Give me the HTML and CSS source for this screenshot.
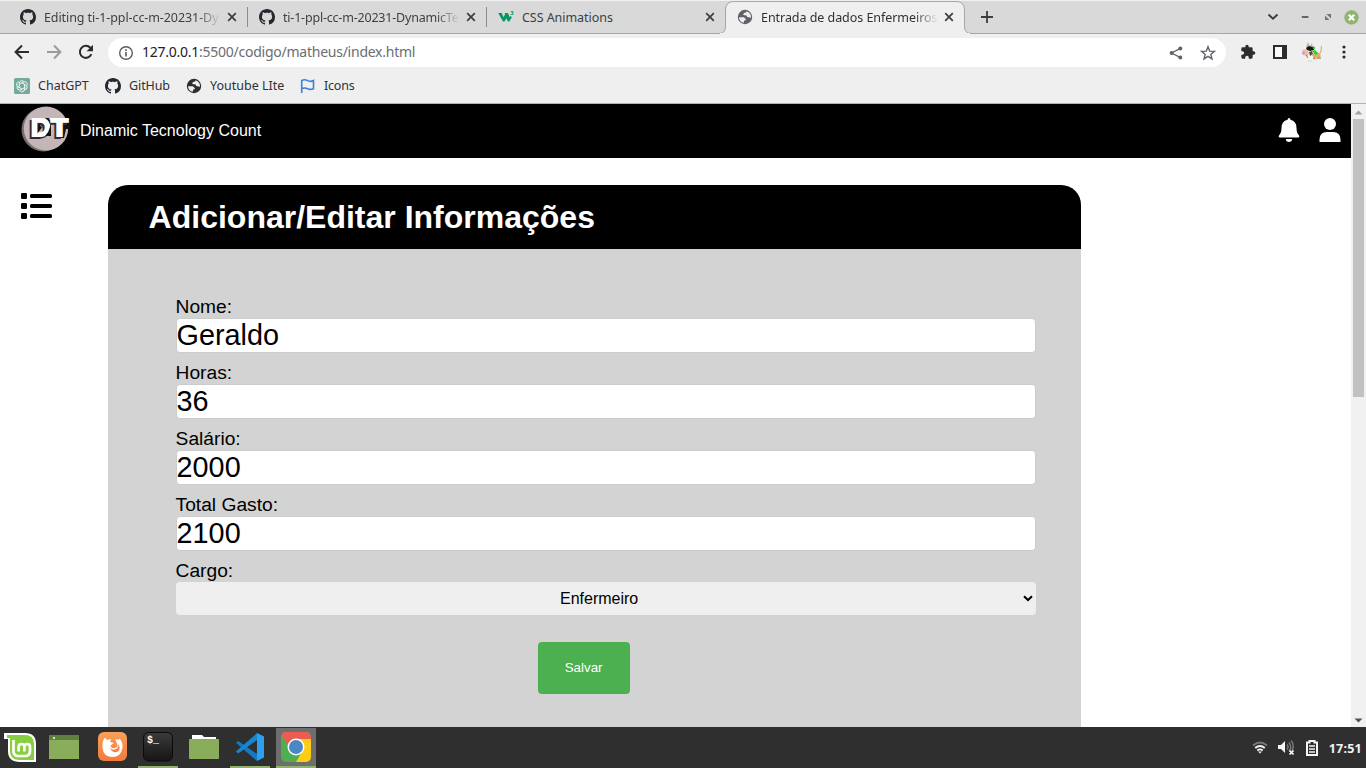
FILE: index.html
```html
<!DOCTYPE html>
<html lang="pt-BR">
<head>
<meta charset="utf-8">
<title>Entrada de dados Enfermeiros</title>
<link rel="stylesheet" href="styles.css">
</head>
<body>
<svg class="defs" width="0" height="0">
  <symbol id="github" viewBox="0 0 16 16"><path d="M8 0C3.58 0 0 3.58 0 8c0 3.54 2.29 6.53 5.47 7.59.4.07.55-.17.55-.38 0-.19-.01-.82-.01-1.49-2.01.37-2.53-.49-2.69-.94-.09-.23-.48-.94-.82-1.13-.28-.15-.68-.52-.01-.53.63-.01 1.08.58 1.23.82.72 1.21 1.87.87 2.33.66.07-.52.28-.87.51-1.07-1.78-.2-3.64-.89-3.64-3.95 0-.87.31-1.59.82-2.15-.08-.2-.36-1.02.08-2.12 0 0 .67-.21 2.2.82.64-.18 1.32-.27 2-.27s1.36.09 2 .27c1.53-1.04 2.2-.82 2.2-.82.44 1.1.16 1.92.08 2.12.51.56.82 1.27.82 2.15 0 3.07-1.87 3.75-3.65 3.95.29.25.54.73.54 1.48 0 1.07-.01 1.93-.01 2.2 0 .21.15.46.55.38A8.01 8.01 0 0 0 16 8c0-4.42-3.58-8-8-8z"/></symbol>
  <symbol id="globe" viewBox="0 0 16 16"><circle cx="8" cy="8" r="7.2"/><path d="M2 8.2 6.8 8.3 9 10.2 8.2 11.4 7.1 11.5 6.8 13.8C4 13.3 2.1 11.2 2 8.2zM9.4 2.2 9.2 3.5 6.9 4.1 6.2 5.9 9.7 6.5 10.2 8.1 13.9 8.8C14.5 5.8 12.5 3 9.4 2.2z" fill="#efefef"/></symbol>
  <symbol id="close" viewBox="0 0 10 10"><path d="M1.2 1.2 8.8 8.8M8.8 1.2 1.2 8.8" fill="none" stroke="#3c3d3f" stroke-width="1.7"/></symbol>
</svg>

<div class="browser">
  <div class="tabstrip">
    <div class="tab tab-first">
      <svg class="fav"><use href="#github"/></svg><span class="title t1 fade">Editing ti-1-ppl-cc-m-20231-Dy</span><svg class="x"><use href="#close"/></svg>
    </div>
    <div class="tab">
      <svg class="fav"><use href="#github"/></svg><span class="title t2 fade">ti-1-ppl-cc-m-20231-DynamicTe</span><svg class="x"><use href="#close"/></svg>
    </div>
    <div class="tab tab-w3">
      <svg class="fav w3" viewBox="0 0 16 16"><path d="M.2 4h3.500l1.800 4.200L7.100 5 6.700 4h3.200l1.900 4.300L12.700 7l1.200 1.300-2.600 4.200H9.900L8.200 9.300l-1.600 3.200H5z" fill="#059862"/><text x="12.3" y="6.2" font-size="6">3</text></svg><span class="title t3">CSS Animations</span><svg class="x"><use href="#close"/></svg>
    </div>
    <div class="tab tab-active">
      <svg class="tab-shape" viewBox="0 0 254 34"><path d="M0 32.5Q7.500 32.500 7.500 26V9Q7.500.5 16 .5H238Q246.500.5 246.500 9V26Q246.500 32.500 254 32.500" fill="#efefef" stroke="#a6a6a6"/><path d="M2 32h250v2H2z" fill="#efefef"/></svg>
      <svg class="fav grey"><use href="#globe"/></svg><span class="title t4 fade">Entrada de dados Enfermeiros</span><svg class="x"><use href="#close"/></svg>
    </div>
    <svg class="plus" viewBox="0 0 14 14"><path d="M7 1v12M1 7h12" stroke="#3c3d3f" stroke-width="1.8"/></svg>
    <div class="window-controls">
      <svg width="12" height="8" viewBox="0 0 12 8"><path d="m1.500 1.500 4.500 4.300 4.500-4.300" fill="none" stroke="#3c3d3f" stroke-width="1.9"/></svg>
      <svg class="mini" width="8" height="8" viewBox="0 0 8 8"><path d="M.8 4h6.600" stroke="#666" stroke-width="2"/></svg>
      <svg class="maxi" width="8" height="8" viewBox="0 0 8 8"><path d="M2.500 1H7v4.500zM1 2.500V7h4.500z" fill="#737373"/></svg>
      <svg class="quit" width="15" height="15" viewBox="0 0 15 15"><circle cx="7.500" cy="7.500" r="7.200" fill="#92b372"/><path d="m4.800 4.800 5.400 5.400m0-5.400-5.400 5.400" stroke="#fff" stroke-width="2.200"/></svg>
    </div>
  </div>

  <div class="toolbar">
    <svg class="nav" viewBox="0 0 16 16"><path d="M15 8H2M8 1.500 1.600 8 8 14.500" fill="none" stroke="#2b2c2e" stroke-width="2"/></svg>
    <svg class="nav" viewBox="0 0 16 16"><path d="M1 8h13M8 1.500 14.400 8 8 14.500" fill="none" stroke="#9b9b9b" stroke-width="2"/></svg>
    <svg class="nav" viewBox="0 0 16 16"><path d="M13.400 10.200A6 6 0 1 1 12.300 3.800L14 5.500" fill="none" stroke="#2b2c2e" stroke-width="2"/><path d="M15 .8v6.400H8.600z" fill="#2b2c2e"/></svg>
    <div class="omnibox">
      <svg width="16" height="16" viewBox="0 0 16 16"><circle cx="8" cy="8" r="6.300" fill="none" stroke="#5a5d60" stroke-width="1.400"/><path d="M8 7v4.500M8 4.200v1.700" stroke="#5a5d60" stroke-width="1.600"/></svg>
      <span class="url"><b>127.0.0.1</b>:5500/codigo/matheus/index.html</span>
      <svg width="14" height="14" viewBox="0 0 14 14"><path d="M11.500 2.400 2.600 7l8.900 4.600" fill="none" stroke="#5f6368" stroke-width="1.300"/><g fill="#5f6368"><circle cx="11.300" cy="2.400" r="2"/><circle cx="2.600" cy="7" r="2"/><circle cx="11.300" cy="11.600" r="2"/></g></svg>
      <svg class="star" width="16" height="16" viewBox="0 0 16 16"><path d="m8 1.800 1.700 4.300 4.700.3-3.600 3 1.200 4.500L8 11.400l-4 2.500 1.200-4.500-3.600-3 4.700-.3z" fill="none" stroke="#5f6368" stroke-width="1.400"/></svg>
    </div>
    <svg class="puzzle" width="16" height="16" viewBox="0 0 24 24"><path d="M20.500 11H19V7a2 2 0 0 0-2-2h-4V3.500a2.500 2.500 0 0 0-5 0V5H4a2 2 0 0 0-2 2v3.800h1.500a2.700 2.700 0 0 1 0 5.400H2V20a2 2 0 0 0 2 2h3.800v-1.500a2.700 2.700 0 0 1 5.400 0V22H17a2 2 0 0 0 2-2v-4h1.500a2.500 2.500 0 0 0 0-5z" fill="#2b2c2e"/></svg>
    <svg class="panel" width="14" height="14" viewBox="0 0 14 14"><path d="M1 1h12v12H1z" fill="#fafafa" stroke="#2b2c2e" stroke-width="2"/><path d="M9 1h4v12H9z" fill="#2b2c2e"/></svg>
    <svg class="avatar" width="22" height="22" viewBox="0 0 22 22"><path d="M3 5l6-3 5 3 4 6-3 8H7l-4-5z" fill="#f6f3ea"/><path d="M17 14q3.500-1 3.500-9" fill="none" stroke="#d9b48f" stroke-width="1.300"/><path d="M11 14l3-3 4 1 2 3-3 3-4-.5z" fill="#dfae6c"/><path d="M1 9l4-1 3 4-1 3-5-1z" fill="#e6c3a6"/><path d="M5 6 7 1l2 4 2-3 1 5-5 2z" fill="#bdb7ac"/><path d="M5 7l3-2 5 1.500V9L9 10 6 9z" fill="#171c16"/><path d="M8 11l3-1 1 3-3 2z" fill="#555047"/><path d="m12 5 2 1v2h-2zM11 10l3-1 3 3-2 2z" fill="#24d424"/><circle cx="2.500" cy="12" r="1.600" fill="#e48fd0"/><path d="M5 14l2 3M12 17l2 1M17 17h3" stroke="#8b6d4c"/><path d="M7 20h4" stroke="#b5e6de"/></svg>
    <svg class="kebab" width="4" height="14" viewBox="0 0 4 14"><g fill="#2b2c2e"><circle cx="2" cy="2" r="1.600"/><circle cx="2" cy="7" r="1.600"/><circle cx="2" cy="12" r="1.600"/></g></svg>
  </div>

  <div class="bookmarks">
    <svg width="16" height="16" viewBox="0 0 16 16"><rect width="16" height="16" rx="1.500" fill="#74aa9c"/><g fill="none" stroke="#fff" stroke-width=".85"><g id="knot"><path d="M5.300 10V5.200a2.600 2.600 0 0 1 4.800-1.300M5.600 6.300 9.700 4a2.600 2.600 0 0 1 3.500 3.200"/></g><use href="#knot" transform="rotate(120 8 8)"/><use href="#knot" transform="rotate(240 8 8)"/></g></svg>
    <span class="bm b1">ChatGPT</span>
    <svg width="16" height="16" fill="#24292f"><use href="#github"/></svg>
    <span class="bm b2">GitHub</span>
    <svg width="16" height="16" fill="#2d2e30"><use href="#globe"/></svg>
    <span class="bm b3">Youtube LIte</span>
    <svg width="16" height="16" viewBox="0 0 16 16"><path d="M1.700 15V2.400q3.200-1.300 6 .2t5.800-.1v8.200q-3 1.400-5.800 0t-6 .1" fill="none" stroke="#3f7fd9" stroke-width="1.600"/></svg>
    <span class="bm b4">Icons</span>
  </div>
</div>

<div class="viewport">
  <div class="page">
    <header class="site-header">
      <svg class="logo" width="49" height="46" viewBox="0 0 49 46"><ellipse cx="22.500" cy="23.500" rx="22" ry="22" fill="#776e6f"/><ellipse cx="25" cy="22.500" rx="22.200" ry="22" fill="#c4b5b6"/><path d="M44 16h5v7h-4l-2 9h-4V20z" fill="#111"/><g class="logo-text"><text x="8" y="31.500" fill="#37292c" stroke="#37292c" textLength="37" lengthAdjust="spacingAndGlyphs">DT</text><text x="10" y="30.300" fill="#fff" stroke="#fff" textLength="37" lengthAdjust="spacingAndGlyphs">DT</text></g><path d="M24 12q6 4 5 9t-5 9h6V19l-2-7z" fill="#151515"/><path d="m16.500 16.500 4.500 5-4.500 6z" fill="#151515"/></svg>
      <span class="brand">Dinamic Tecnology Count</span>
      <svg class="bell" width="22" height="24" viewBox="0 0 22 24"><path d="M11 0q1.400 0 1.400 1.800Q18.500 3.200 18.500 10c0 4 1 5.600 2.400 7.200q1.200 2.300-.9 2.300H2q-2.100 0-.9-2.300C2.500 15.600 3.500 14 3.500 10q0-6.800 6.100-8.200Q9.600 0 11 0zM7.700 21h6.600q-.5 3-3.300 3t-3.300-3z" fill="#fff"/></svg>
      <svg class="user" width="22" height="24" viewBox="0 0 22 24"><circle cx="11" cy="6" r="6" fill="#fff"/><path d="M.5 24v-2.500Q.5 14 8 14h6q7.500 0 7.500 7.500V24z" fill="#fff"/></svg>
    </header>
    <main class="content">
      <svg class="menu" width="32" height="26" viewBox="0 0 32 26"><rect y="0" width="6" height="6" rx="1.300"/><rect y="10" width="6" height="6" rx="1.300"/><rect y="20" width="6" height="6" rx="1.300"/><rect x="9" y="1" width="22" height="4" rx="1.500"/><rect x="9" y="11" width="22" height="4" rx="1.500"/><rect x="9" y="21" width="22" height="4" rx="1.500"/></svg>
      <section class="card">
        <h1>Adicionar/Editar Informações</h1>
        <form class="form">
          <div class="field"><label for="nome">Nome:</label><input id="nome" value="Geraldo"></div>
          <div class="field"><label for="horas">Horas:</label><input id="horas" value="36"></div>
          <div class="field"><label for="salario">Salário:</label><input id="salario" value="2000"></div>
          <div class="field"><label for="gasto">Total Gasto:</label><input id="gasto" value="2100"></div>
          <div class="field"><label>Cargo:</label>
            <div class="select"><span>Enfermeiro</span><svg width="10" height="7" viewBox="0 0 10 7"><path d="m1 1.200 4 3.800 4-3.800" fill="none" stroke="#000" stroke-width="2"/></svg></div>
          </div>
          <button type="button" class="save">Salvar</button>
        </form>
      </section>
    </main>
  </div>
  <div class="scrollbar">
    <svg width="9" height="5" viewBox="0 0 9 5"><path d="M.5 4.500 4.500.500l4 4z" fill="#a3a3a3"/></svg>
    <div class="thumb"></div>
    <svg class="down" width="9" height="5" viewBox="0 0 9 5"><path d="m.5.500 4 4 4-4z" fill="#505050"/></svg>
  </div>
</div>

<footer class="taskbar">
  <div class="task mint"><svg width="32" height="30" viewBox="0 0 32 30"><path d="M0 0h21q11 0 11 11v18H16Q4 29 4 18V6H0z" fill="#fff"/><path d="M3 2h18q9 0 9 9v16H16Q6 27 6 18V5H3z" fill="#87cf3e"/><path d="M9.500 7v11q0 5 5 5H21q5 0 5-5v-4q0-3-2.800-3T20.400 14v4.500M14.600 18.500V14q0-3 2.900-3t2.900 3" fill="none" stroke="#fff" stroke-width="2.700"/></svg></div>
  <div class="task files"><svg width="30" height="24" viewBox="0 0 30 24"><path d="M0 0h30v24H0z" fill="#8aad5b"/><path d="M0 0h30v5H0z" fill="#60803f"/><circle cx="5" cy="3" r="1" fill="#fff"/></svg></div>
  <div class="task"><svg width="29" height="29" viewBox="0 0 29 29"><defs><linearGradient id="orange" x2="0" y2="1"><stop stop-color="#f9a15b"/><stop offset="1" stop-color="#f37a3b"/></linearGradient></defs><rect width="29" height="29" rx="6" fill="url(#orange)"/><path d="M7 5.500 9 8q2-1 4.300-.7Q12 8.500 12.200 10l3.500 1-3.200 2.500q.5 3 3.500 2.700 2.500-.5 3.800-2.200L18.500 10 17 7q5 1.500 4.500-.5 3.500 4 3 9Q23 25 14.500 25 5.500 25 4.500 16 4 9 7 5.500z" fill="#fff"/><path d="M11 15q3 4 7 2 3-1.500 2-5 3 4 .5 7-5 4-9.500-4z" fill="#f38346"/></svg></div>
  <div class="task open"><svg width="30" height="30" viewBox="0 0 30 30"><defs><linearGradient id="dark" x2="0" y2="1"><stop stop-color="#3b3b3b"/><stop offset="1" stop-color="#151515"/></linearGradient></defs><rect x=".5" y=".5" width="29" height="28.500" rx="5" fill="url(#dark)" stroke="#0b0b0b"/><text class="prompt" x="4" y="10.500">$_</text></svg></div>
  <div class="task"><svg width="30" height="24" viewBox="0 0 30 24"><path d="M3 0h10l2 2h12v4H3z" fill="#fff"/><path d="M0 5q0-1 1-1h28q1 0 1 1v18q0 1-1 1H1q-1 0-1-1z" fill="#8aad5b"/></svg></div>
  <div class="task open"><svg width="28" height="28" viewBox="0 0 28 28"><path d="M0 9.800 2.200 8 21 21v7z" fill="#1479c4"/><path d="M0 18.500 21 0v7L2.200 20.400z" fill="#1686d3"/><path d="m21 0 7 3.500v21L21 28z" fill="#2aa0ee"/></svg></div>
  <div class="task open active"><svg width="30" height="30" viewBox="0 0 30 30"><defs><clipPath id="round"><rect width="30" height="30" rx="5"/></clipPath></defs><g clip-path="url(#round)"><path d="M0 0h30v30H0z" fill="#4fae50"/><path d="M14 7h16v23H15l7-12z" fill="#fccd12"/><path d="M0 0h30v7H15l-7 8L1 4z" fill="#ec5c51"/></g><circle cx="15" cy="15" r="8.500" fill="#fff"/><circle cx="15" cy="15" r="7" fill="#4a87c7"/></svg></div>
  <div class="tray">
    <svg width="16" height="13" viewBox="0 0 16 13"><g fill="none" stroke-width="1.800"><path d="M1 4.500q7-6 14 0" stroke="#777"/><path d="M3.200 7q4.800-4 9.600 0" stroke="#f5f5f5"/><path d="M5.300 9.500q2.700-2.300 5.400 0" stroke="#f5f5f5"/></g><path d="M6 10.500h4l-2 2z" fill="#f5f5f5"/></svg>
    <svg class="sound" width="17" height="16" viewBox="0 0 17 16"><path d="M0 5h3l4-4v12l-4-4H0z" fill="#f5f5f5"/><path d="M9 4.500q2 2.500 0 5M11 2.500q3.500 4.500 0 9M13 .500q4 5 1 10" fill="none" stroke="#777" stroke-width="1.500"/><path d="m11.500 10.500 4 4m0-4-4 4" stroke="#fff" stroke-width="1.700"/></svg>
    <svg class="battery" width="12" height="16" viewBox="0 0 12 16"><path d="M1 2.500h2.500V1h5v1.500H11V15H1z" fill="none" stroke="#f5f5f5" stroke-width="2"/><path d="M3 6h6M3 9h6M3 12h6" stroke="#f5f5f5" stroke-width="1.500"/></svg>
    <span class="clock">17:51</span>
  </div>
</footer>
</body>
</html>
```
FILE: styles.css
```css
* { box-sizing: border-box; }
body { margin: 0; width: 1366px; height: 768px; display: flex; flex-direction: column; overflow: hidden; font-family: "Liberation Sans", Arial, sans-serif; background: #fff; }
svg { display: block; flex: none; }
.defs { position: absolute; }

.browser { height: 104px; flex: none; background: #efefef; border-bottom: 1px solid #b4b4b4; font-family: "Noto Sans", sans-serif; color: #303133; }
.tabstrip { height: 34px; display: flex; align-items: center; background: #d9d9d9; border-top: 1px solid #f0f0f0; border-bottom: 1px solid #a6a6a6; }
.tab { position: relative; width: 239px; height: 20px; display: flex; align-items: center; padding: 0 9px 0 11px; border-right: 1px solid #8c8c8c; }
.tab-first { width: 248px; padding-left: 20px; }
.tab-w3 { border-right: 0; padding-right: 10px; }
.tab-active { width: 239px; border: 0; padding-left: 11px; padding-right: 11px; }
.tab-shape { position: absolute; left: -8px; top: -6px; width: 254px; height: 34px; overflow: visible; }
.fav { position: relative; width: 16px; height: 16px; fill: #24292f; margin-right: 8px; }
.fav.w3 { fill: #059862; font-weight: bold; }
.fav.grey { fill: #5f6368; }
.title { position: relative; flex: none; width: 177px; padding-top: 1px; font-size: 12.5px; line-height: 20px; white-space: nowrap; overflow: hidden; color: #3e3f41; }
.fade { -webkit-mask-image: linear-gradient(90deg, #000 153px, transparent 177px); mask-image: linear-gradient(90deg, #000 153px, transparent 177px); }
.t1 { letter-spacing: -.08px; }
.t2 { letter-spacing: -.2px; }
.t3 { letter-spacing: -.05px; }
.t4 { letter-spacing: -.05px; color: #303133; }
.x { position: relative; width: 10px; height: 10px; margin-left: auto; margin-right: 1px; }
.tab-active .x { margin-right: 0; }
.plus { width: 14px; height: 14px; margin-left: 15px; }
.window-controls { display: flex; align-items: center; margin-left: auto; padding-right: 7px; }
.mini { margin-left: 22px; }
.maxi { margin-left: 15px; }
.quit { margin-left: 12px; }

.toolbar { height: 36px; display: flex; align-items: center; padding-left: 14px; }
.nav { width: 16px; height: 16px; margin-right: 16px; }
.omnibox { width: 1118px; height: 29px; margin-left: -2px; margin-top: 1px; border-radius: 15px; background: #fff; display: flex; align-items: center; padding: 0 10px; }
.url { margin-left: 8px; margin-right: auto; padding-bottom: 2px; font-size: 14px; letter-spacing: -.25px; color: #6a6d71; }
.url b { font-weight: 400; color: #202124; }
.star { margin-left: 17px; }
.puzzle { margin-left: 14px; }
.panel { margin-left: 17px; }
.avatar { margin-left: 14px; }
.kebab { margin-left: 19px; }
.bookmarks { height: 32px; display: flex; align-items: center; padding-left: 14px; }
.bm { margin-left: 8px; padding-bottom: 2px; font-size: 12.5px; white-space: nowrap; }
.b1 { width: 67px; }
.b2 { width: 57px; letter-spacing: -.1px; }
.b3 { width: 90px; }
.b4 { letter-spacing: -.2px; }

.viewport { flex: 1; min-height: 0; display: flex; }
.page { flex: 1; overflow: hidden; }
.site-header { height: 54px; background: #000; display: flex; align-items: center; padding: 0 10px 0 21px; }
.logo { margin-top: -4px; }
.logo-text { font-family: "Liberation Sans", sans-serif; font-size: 24px; font-weight: bold; stroke-width: 2; }
.brand { color: #fff; font-size: 16px; margin-left: 10px; margin-right: auto; }
.bell { margin: -2px 19px 0 0; }
.user { margin-top: -2px; }
.content { display: flex; align-items: flex-start; padding: 27px 0 0 21px; }
.menu { margin-top: 8px; margin-right: 55px; }
.card { width: 973px; height: 620px; background: #d3d3d3; border-radius: 20px 20px 0 0; overflow: hidden; }
h1 { margin: 0; height: 64px; background: #000; color: #fff; font-size: 32px; line-height: 64px; padding-left: 40.6px; }
.form { padding: 47px 45px 0 67.6px; display: flex; flex-direction: column; }
.field { height: 66px; }
.field label { display: block; font-size: 19.2px; line-height: 22px; color: #000; }
.field input { display: block; width: 860px; height: 35px; border: 1px solid #ccc; border-radius: 4px; padding: 0; background: #fff; color: #000; font: 28.8px "Liberation Sans", sans-serif; outline: 0; }
.select { width: 860px; height: 33px; border-radius: 4px; background: #efefef; display: flex; align-items: center; font-size: 16px; padding-right: 3px; }
.select span { flex: 1; text-align: center; }
.save { width: 92px; height: 52px; margin: 16px 0 0 362px; border: 0; border-radius: 4px; background: #4caf50; color: #fff; font: 13.333px "Liberation Sans", sans-serif; padding: 0 0 2px; }
.scrollbar { width: 15px; background: #f1f1f1; display: flex; flex-direction: column; align-items: center; padding: 6px 0 4px; }
.thumb { width: 11px; height: 278px; margin-top: 4px; background: #c1c1c1; }
.down { margin-top: auto; }

.taskbar { height: 41px; flex: none; background: #2f2f2f; display: flex; align-items: center; }
.task { width: 40px; height: 41px; margin-right: 6px; display: flex; align-items: center; justify-content: center; border-bottom: 2px solid transparent; }
.task.mint { padding-top: 2px; margin-right: 4px; }
.task.files { margin-right: 8px; }
.task.open { border-bottom-color: #91b26e; }
.task.active { background: #6e6e6e; border-top: 1px solid #2f2f2f; }
.prompt { font: bold 10px "Liberation Mono", monospace; fill: #fff; }
.tray { margin-left: auto; display: flex; align-items: center; padding-right: 4px; }
.sound { margin-left: 10px; }
.battery { margin-left: 11px; }
.clock { margin-left: 11px; padding-top: 2px; color: #f3f3f3; font: bold 12.5px "Noto Sans", sans-serif; letter-spacing: .25px; }
```
